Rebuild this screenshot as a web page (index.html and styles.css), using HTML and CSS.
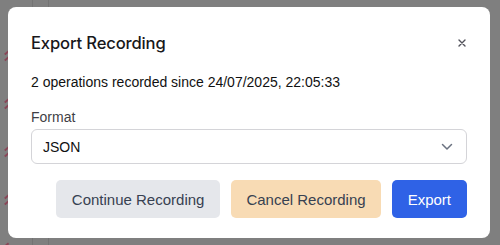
FILE: index.html
```html
<!DOCTYPE html>
<html lang="en">
<head>
    <meta charset="UTF-8">
    <meta name="viewport" content="width=device-width, initial-scale=1.0">
    <title>Export Recording</title>
    <link rel="stylesheet" href="styles.css">
</head>
<body>
    <div class="backdrop">
        <div class="marks">
            <span class="mark"></span>
            <span class="mark"></span>
            <span class="mark"></span>
            <span class="mark"></span>
            <span class="mark"></span>
        </div>
    </div>

    <div class="overlay">
        <div class="modal">
            <div class="modal-header">
                <h2>Export Recording</h2>
                <button class="close-btn" aria-label="Close">
                    <svg width="10" height="10" viewBox="0 0 10 10">
                        <path d="M2 2 L8 8 M8 2 L2 8" stroke="#52525b" stroke-width="1.4" stroke-linecap="round"/>
                    </svg>
                </button>
            </div>

            <p class="summary">2 operations recorded since 24/07/2025, 22:05:33</p>

            <div class="input-group">
                <label>Format</label>
                <div class="select-box">
                    <span>JSON</span>
                    <svg width="12" height="8" viewBox="0 0 12 8">
                        <path d="M1.5 1.5 L6 6 L10.5 1.5" fill="none" stroke="#6b7280" stroke-width="1.5" stroke-linecap="round" stroke-linejoin="round"/>
                    </svg>
                </div>
            </div>

            <div class="actions">
                <button class="btn btn-grey">Continue Recording</button>
                <button class="btn btn-peach">Cancel Recording</button>
                <button class="btn btn-blue">Export</button>
            </div>
        </div>
    </div>
</body>
</html>
```

FILE: styles.css
```css
body {
    margin: 0;
    width: 500px;
    height: 245px;
    font-family: "Liberation Sans", Arial, sans-serif;
    background-color: #7f7f7f;
    background-image:
        linear-gradient(to right, transparent 32px, #737373 32px, #737373 33px, transparent 33px,
                        transparent 48px, #737373 48px, #737373 49px, transparent 49px);
    overflow: hidden;
    position: relative;
}

.backdrop {
    position: absolute;
    top: 0;
    left: 0;
    width: 8px;
    height: 245px;
}

.marks {
    display: flex;
    flex-direction: column;
    gap: 37px;
    padding-top: 50px;
    padding-left: 4px;
}

/* two small slashes per mark */
.mark {
    display: block;
    width: 5px;
    height: 11px;
    position: relative;
}

.mark::before,
.mark::after {
    content: "";
    position: absolute;
    left: 0;
    width: 5px;
    height: 1.5px;
    background-color: #8a4658;
    transform: rotate(-40deg);
}

.mark::before {
    top: 2px;
}

.mark::after {
    top: 8px;
}

.overlay {
    position: relative;
    padding: 7px 10px 7px 8px;
}

.modal {
    background-color: #ffffff;
    border-radius: 8px;
    padding: 21px 23px 21px 23px;
    height: 231px;
    box-sizing: border-box;
}

.modal-header {
    display: flex;
    justify-content: space-between;
    align-items: center;
}

h2 {
    margin: 0;
    font-family: Inter, "Liberation Sans", sans-serif;
    font-size: 16.6px;
    font-weight: 500;
    line-height: 30px;
    color: #18181b;
    letter-spacing: -0.15px;
}

.close-btn {
    background: none;
    border: none;
    padding: 0;
    margin-right: -1px;
    width: 12px;
    height: 12px;
    display: flex;
    align-items: center;
    justify-content: center;
    cursor: pointer;
}

.summary {
    margin: 14px 0 0 0;
    font-size: 14px;
    line-height: 20px;
    color: #111111;
}

.input-group {
    margin-top: 16px;
}

.input-group label {
    display: block;
    font-size: 14px;
    line-height: 18px;
    color: #3f3f46;
    margin-bottom: 3px;
}

.select-box {
    display: flex;
    justify-content: space-between;
    align-items: center;
    height: 35px;
    box-sizing: border-box;
    border: 1px solid #d4d4d8;
    border-radius: 6px;
    padding: 0 13px 0 11px;
    font-size: 14px;
    color: #111111;
}

.actions {
    display: flex;
    justify-content: flex-end;
    gap: 11px;
    margin-top: 16px;
}

.btn {
    height: 38px;
    padding: 0 16px;
    border: none;
    border-radius: 5px;
    font-family: "Liberation Sans", Arial, sans-serif;
    font-size: 15px;
    color: #374151;
    cursor: pointer;
}

.btn-grey {
    background-color: #e5e7eb;
}

.btn-peach {
    background-color: #f8dbb4;
    padding: 0 15px;
}

.btn-blue {
    background-color: #2f62e6;
    color: #ffffff;
}
```
